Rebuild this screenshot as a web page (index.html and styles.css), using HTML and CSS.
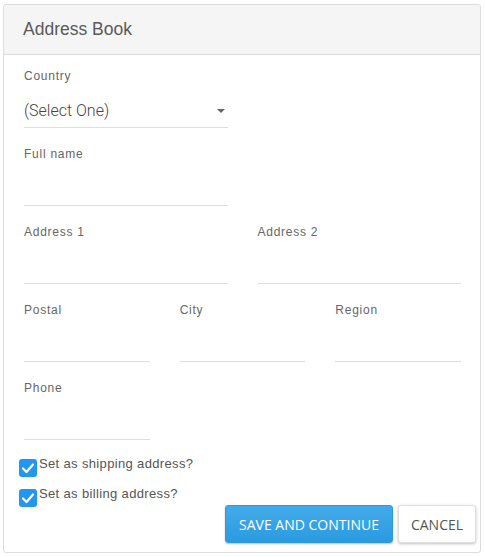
FILE: index.html
```html
<!DOCTYPE html>
<html>
<head>
<meta charset="utf-8">
<link rel="stylesheet" href="styles.css">
</head>
<body>
<div class="card">
  <div class="card-header">Address Book</div>
  <div class="card-body">
    <div class="grid grid-2">
      <div class="field">
        <div class="label">Country</div>
        <div class="input select"><span>(Select One)</span><span class="caret"></span></div>
      </div>
    </div>
    <div class="grid grid-2">
      <div class="field">
        <div class="label">Full name</div>
        <div class="input"></div>
      </div>
    </div>
    <div class="grid grid-2">
      <div class="field">
        <div class="label">Address 1</div>
        <div class="input"></div>
      </div>
      <div class="field">
        <div class="label">Address 2</div>
        <div class="input"></div>
      </div>
    </div>
    <div class="grid grid-3">
      <div class="field">
        <div class="label">Postal</div>
        <div class="input"></div>
      </div>
      <div class="field">
        <div class="label">City</div>
        <div class="input"></div>
      </div>
      <div class="field">
        <div class="label">Region</div>
        <div class="input"></div>
      </div>
    </div>
    <div class="grid grid-3">
      <div class="field">
        <div class="label">Phone</div>
        <div class="input"></div>
      </div>
    </div>
    <div class="checks">
      <div class="check-row">
        <span class="checkbox"><svg viewBox="0 0 18 18" width="18" height="18"><path d="M4 9.5 L7.5 13 L14 5.5" fill="none" stroke="#fff" stroke-width="2.2" stroke-linecap="round" stroke-linejoin="round"/></svg></span>
        <span class="check-text">Set as shipping address?</span>
      </div>
      <div class="check-row">
        <span class="checkbox"><svg viewBox="0 0 18 18" width="18" height="18"><path d="M4 9.5 L7.5 13 L14 5.5" fill="none" stroke="#fff" stroke-width="2.2" stroke-linecap="round" stroke-linejoin="round"/></svg></span>
        <span class="check-text">Set as billing address?</span>
      </div>
    </div>
    <div class="actions">
      <button class="btn btn-primary">SAVE AND CONTINUE</button>
      <button class="btn btn-default">CANCEL</button>
    </div>
  </div>
</div>
</body>
</html>
```
FILE: styles.css
```css
html, body {
  margin: 0;
  padding: 0;
  background: #fff;
}
body {
  padding: 4px 4px 0 3px;
  font-family: "Liberation Sans", Arial, Helvetica, sans-serif;
}
.card {
  border: 1px solid #dcdcdc;
  border-radius: 3px;
  background: #fff;
  width: 478px;
  box-sizing: border-box;
}
.card-header {
  height: 49px;
  background: #f5f5f5;
  border-bottom: 1px solid #dcdcdc;
  border-radius: 3px 3px 0 0;
  padding-left: 19px;
  font-size: 17.5px;
  line-height: 49px;
  color: #5a5a5a;
}
.card-body {
  padding: 11px 19px 9px 20px;
}
.grid {
  display: grid;
  column-gap: 30px;
  margin-bottom: 16px;
}
.grid-2 {
  grid-template-columns: 1fr 1fr;
}
.grid-3 {
  grid-template-columns: 1fr 1fr 1fr;
}
.field {
  display: flex;
  flex-direction: column;
}
.label {
  font-size: 12px;
  line-height: 16px;
  padding-top: 2px;
  letter-spacing: 0.75px;
  color: #666;
}
.input {
  height: 43px;
  border-bottom: 1px solid #dedede;
}
.select {
  display: flex;
  align-items: flex-end;
  justify-content: space-between;
  box-sizing: border-box;
  height: 44px;
  padding: 0 3px 6px 0;
  font-family: Roboto, "Liberation Sans", sans-serif;
  font-weight: 300;
  font-size: 16px;
  line-height: 20px;
  color: #444;
}
.caret {
  width: 0;
  height: 0;
  border-left: 4px solid transparent;
  border-right: 4px solid transparent;
  border-top: 4px solid #666;
  margin-bottom: 8px;
}
.checks {
  margin-left: -5px;
  padding-top: 3px;
  display: flex;
  flex-direction: column;
  gap: 12px;
}
.check-row {
  display: flex;
  align-items: flex-start;
  gap: 2px;
}
.checkbox {
  width: 18px;
  height: 18px;
  border-radius: 3px;
  background: #2196f3;
  display: block;
}
.checkbox svg {
  display: block;
}
.check-text {
  font-size: 13px;
  line-height: 16px;
  margin-top: -3px;
  letter-spacing: 0.35px;
  color: #555;
}
.actions {
  display: flex;
  justify-content: flex-end;
  gap: 5px;
  margin-right: -15px;
  margin-top: -2px;
}
.btn {
  height: 38px;
  border-radius: 3px;
  font-family: "Open Sans", sans-serif;
  font-size: 14px;
  padding: 0;
  cursor: pointer;
}
.btn-primary {
  width: 168px;
  background: linear-gradient(#43aaea, #2a9be0);
  border: 1px solid #2b9ade;
  color: #fff;
  box-shadow: 0 1px 2px rgba(0,0,0,0.25);
}
.btn-default {
  width: 78px;
  background: #fff;
  border: 1px solid #e0e0e0;
  color: #555;
  box-shadow: 0 1px 3px rgba(0,0,0,0.25);
}
```
